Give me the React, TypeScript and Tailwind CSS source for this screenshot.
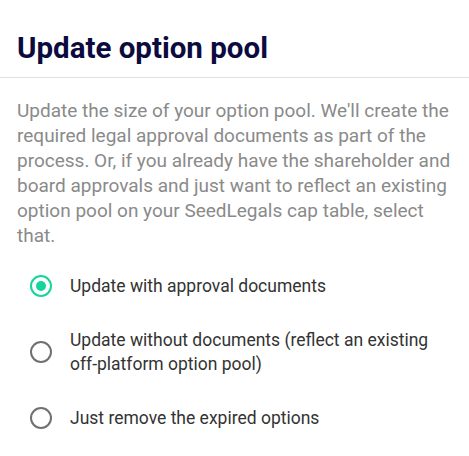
import React from 'react';

const options = [
    { id: 'with-docs', label: 'Update with approval documents' },
    {
        id: 'without-docs',
        label: 'Update without documents (reflect an existing off-platform option pool)',
    },
    { id: 'remove-expired', label: 'Just remove the expired options' },
];

const Radio = ({ checked }: { checked: boolean }): React.JSX.Element => (
    <span
        className={
            checked
                ? 'flex h-[22px] w-[22px] shrink-0 items-center justify-center rounded-full border-2 border-[#15d59c]'
                : 'flex h-[22px] w-[22px] shrink-0 items-center justify-center rounded-full border-2 border-[#707070]'
        }
    >
        {checked && <span className="h-[10px] w-[10px] rounded-full bg-[#15d59c]" />}
    </span>
);

export default function App(): React.JSX.Element {
    const [selected, setSelected] = React.useState('with-docs');

    return (
        <div className="h-[456px] w-[469px] overflow-hidden bg-white font-['Roboto',sans-serif]">
            <div className="border-b border-[#e0e0e0] px-[17px] pt-[30px] pb-[11px]">
                <h1 className="text-[29.5px] leading-[36px] font-bold text-[#0b0b40]">
                    Update option pool
                </h1>
            </div>
            <div className="pt-[20px] pr-[12px] pl-[17px]">
                <p className="text-[19px] leading-[25px] text-[#8a8a8a]">
                    Update the size of your option pool. We'll create the
                    required legal approval documents as part of the process.
                    Or, if you already have the shareholder and board approvals
                    and just want to reflect an existing option pool on your
                    SeedLegals cap table, select that.
                </p>
                <div className="mt-[26px] flex flex-col gap-[30px] pl-[13px]">
                    {options.map((option) => (
                        <label
                            key={option.id}
                            className="flex cursor-pointer items-center gap-[18px]"
                            onClick={() => setSelected(option.id)}
                        >
                            <Radio checked={selected === option.id} />
                            <span className="text-[17.5px] leading-[24px] text-[#333333]">
                                {option.label}
                            </span>
                        </label>
                    ))}
                </div>
            </div>
        </div>
    );
}
